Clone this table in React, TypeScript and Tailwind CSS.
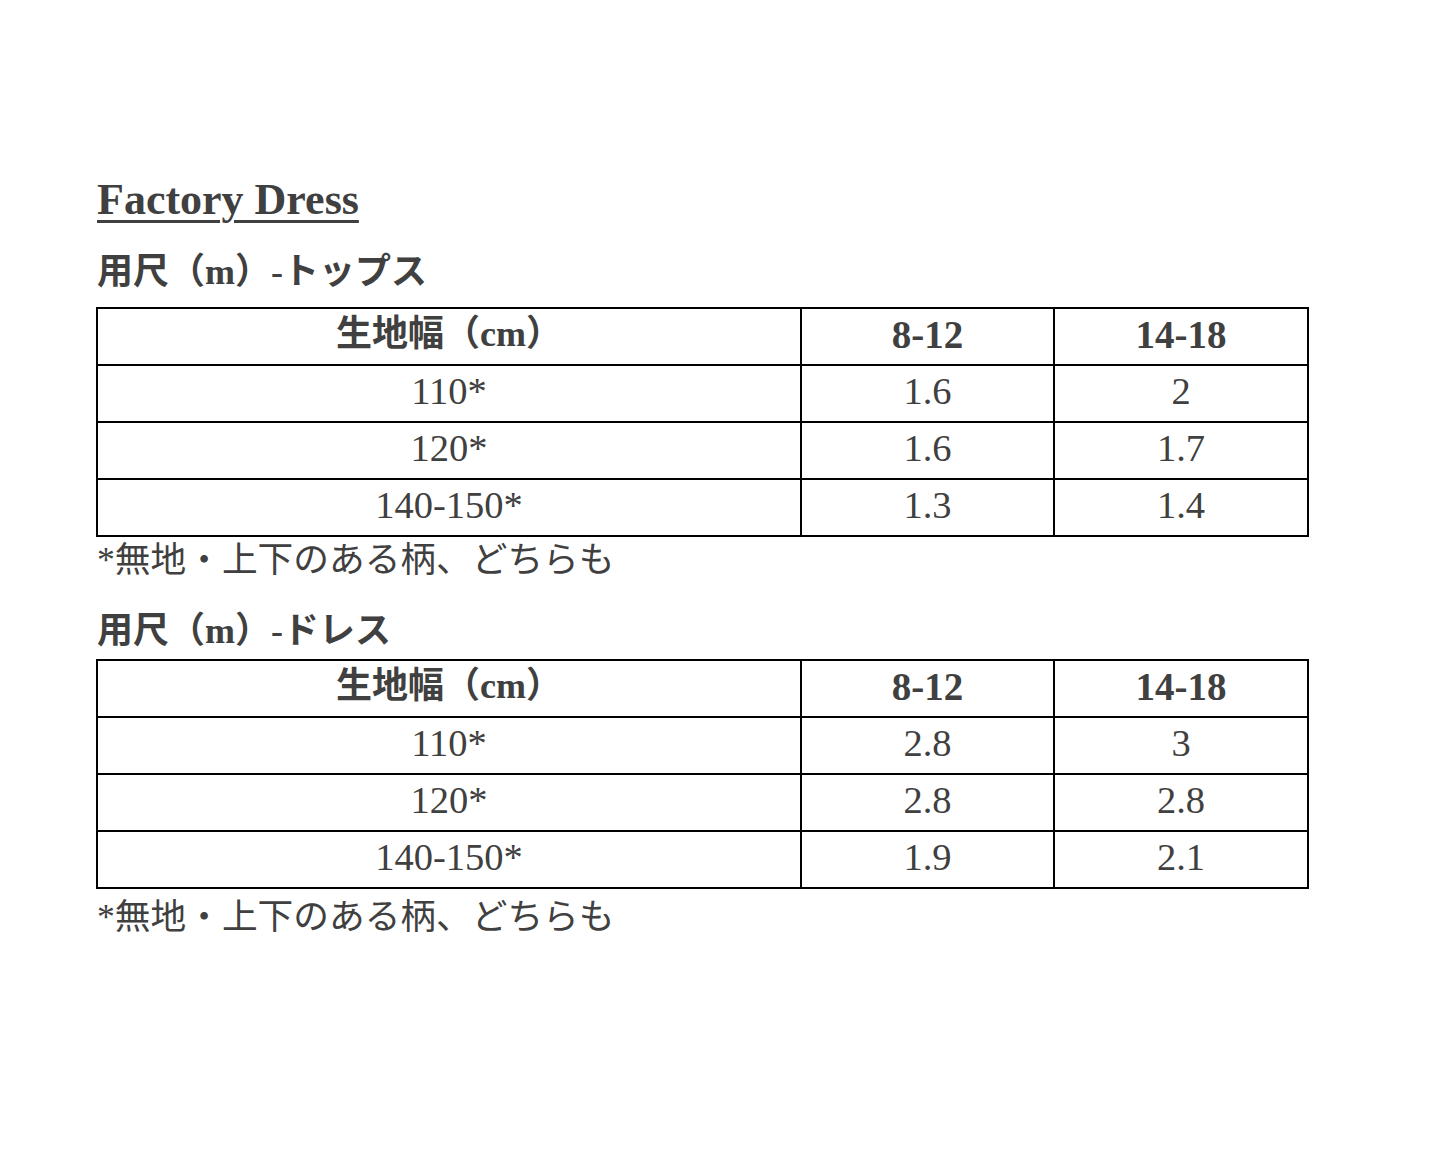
import React from "react";

const font = { fontFamily: '"Liberation Serif", "Noto Sans CJK JP", serif' };

type Row = [string, string, string];

function SizeTable({ rows }: { rows: Row[] }) {
  return (
    <table className="w-[1211px] border-collapse border-2 border-black table-fixed">
      <colgroup>
        <col className="w-[704px]" />
        <col className="w-[253px]" />
        <col className="w-[254px]" />
      </colgroup>
      <thead>
        <tr className="h-[57px]">
          <th className="border-2 border-black text-center font-bold text-[36px] leading-none p-0 pb-[5px]">生地幅（cm）</th>
          <th className="border-2 border-black text-center font-bold text-[39px] leading-none p-0 pb-[5px]">8-12</th>
          <th className="border-2 border-black text-center font-bold text-[39px] leading-none p-0 pb-[5px]">14-18</th>
        </tr>
      </thead>
      <tbody>
        {rows.map((r, i) => (
          <tr key={i} className="h-[57px]">
            <td className="border-2 border-black text-center text-[38.5px] leading-none p-0 pb-[5px]">{r[0]}</td>
            <td className="border-2 border-black text-center text-[38.5px] leading-none p-0 pb-[5px]">{r[1]}</td>
            <td className="border-2 border-black text-center text-[38.5px] leading-none p-0 pb-[5px]">{r[2]}</td>
          </tr>
        ))}
      </tbody>
    </table>
  );
}

export default function App() {
  return (
    <div className="w-[1440px] h-[1152px] bg-white text-[#404040] pl-[96px] pt-[178px]" style={font}>
      <h1 className="text-[44px] leading-[44px] font-bold underline decoration-[3px] underline-offset-[6px] pl-[1px]">
        Factory Dress
      </h1>
      <h2 className="mt-[32px] text-[36px] leading-[36px] font-bold pl-[1px]">用尺（m）-トップス</h2>
      <div className="mt-[17px]">
        <SizeTable
          rows={[
            ["110*", "1.6", "2"],
            ["120*", "1.6", "1.7"],
            ["140-150*", "1.3", "1.4"],
          ]}
        />
      </div>
      <p className="mt-[4px] text-[35.7px] leading-[38px] pl-[1px]">*無地・上下のある柄、どちらも</p>
      <h2 className="mt-[34px] text-[36px] leading-[36px] font-bold pl-[1px]">用尺（m）-ドレス</h2>
      <div className="mt-[10px]">
        <SizeTable
          rows={[
            ["110*", "2.8", "3"],
            ["120*", "2.8", "2.8"],
            ["140-150*", "1.9", "2.1"],
          ]}
        />
      </div>
      <p className="mt-[9px] text-[35.7px] leading-[38px] pl-[1px]">*無地・上下のある柄、どちらも</p>
    </div>
  );
}
